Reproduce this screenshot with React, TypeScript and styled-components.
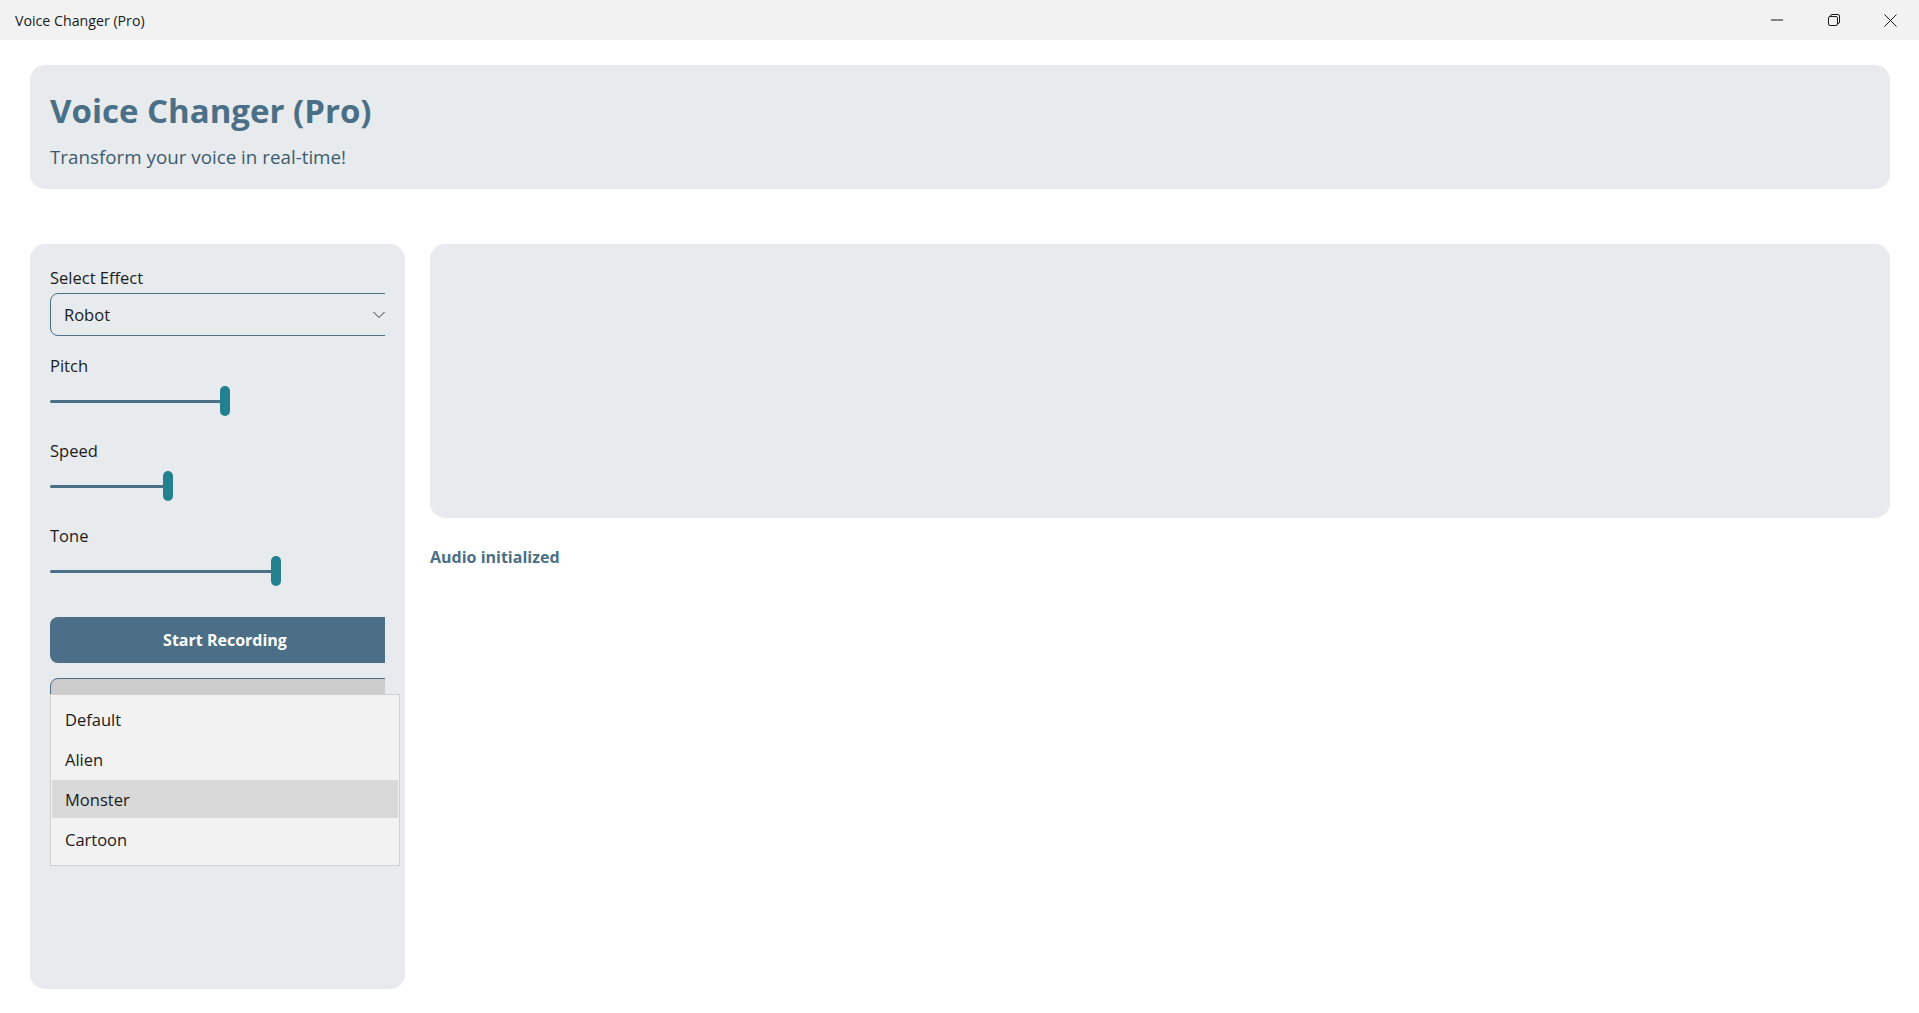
import styled, { createGlobalStyle } from 'styled-components'

const GlobalStyle = createGlobalStyle`
  html, body {
    margin: 0;
    padding: 0;
    background: #ffffff;
    font-family: "Open Sans", "Noto Sans", sans-serif;
    color: #1b1b1b;
  }
  * {
    box-sizing: border-box;
  }
`

const Window = styled.div`
  width: 1919px;
  height: 1013px;
  display: flex;
  flex-direction: column;
  overflow: hidden;
`

const TitleBar = styled.div`
  height: 40px;
  background: #f2f2f2;
  display: flex;
  align-items: center;
  justify-content: space-between;
  padding-left: 15px;
`

const TitleText = styled.span`
  font-size: 14.2px;
  color: #1a1a1a;
`

const Controls = styled.div`
  display: flex;
  height: 100%;
`

const ControlButton = styled.div`
  width: 57px;
  height: 100%;
  display: flex;
  align-items: center;
  justify-content: center;
`

const Content = styled.div`
  flex: 1;
  padding: 25px 29px 24px 30px;
  display: flex;
  flex-direction: column;
  gap: 55px;
`

const Header = styled.div`
  height: 124px;
  background: #e7ebee;
  border-radius: 15px;
  padding: 24px 20px 0 20px;
`

const Title = styled.h1`
  margin: 0;
  font-size: 33px;
  line-height: 44px;
  font-weight: 700;
  color: #4a6f86;
`

const Subtitle = styled.p`
  margin: 11px 0 0 0;
  font-size: 18.8px;
  line-height: 26px;
  color: #3d5b6e;
`

const Body = styled.div`
  flex: 1;
  display: flex;
  gap: 25px;
`

const SidePanel = styled.div`
  position: relative;
  width: 375px;
  background: #e7ebee;
  border-radius: 15px;
  padding: 22px 20px 20px 20px;
`

const Clip = styled.div`
  width: 335px;
  overflow: hidden;
`

const Label = styled.div<{ $gap?: number }>`
  font-size: 16.5px;
  line-height: 24px;
  margin-top: ${p => p.$gap ?? 0}px;
`

const Combo = styled.div<{ $open?: boolean; $gap?: number }>`
  width: 350px;
  height: 43px;
  margin-top: ${p => p.$gap ?? 0}px;
  border: 1px solid #4a6f86;
  border-radius: 8px;
  background: ${p => (p.$open ? '#cccccc' : 'transparent')};
  display: flex;
  align-items: center;
  padding-left: 13px;
  font-size: 16.5px;
  position: relative;
`

const Chevron = styled.svg`
  position: absolute;
  left: 322px;
  top: 17px;
`

const SliderBox = styled.div<{ $gap?: number }>`
  position: relative;
  width: 350px;
  height: 30px;
  margin-top: ${p => p.$gap ?? 0}px;
`

const Track = styled.div`
  position: absolute;
  left: 0;
  top: 14px;
  height: 3px;
  background: #4a6f86;
  border-radius: 2px;
`

const Thumb = styled.div`
  position: absolute;
  top: 0;
  width: 10px;
  height: 30px;
  border-radius: 5px;
  background: #23808f;
`

const RecordButton = styled.button`
  width: 350px;
  height: 46px;
  margin-top: 31px;
  border: none;
  border-radius: 8px;
  background: #4a6f86;
  color: #ffffff;
  font-family: inherit;
  font-size: 16px;
  font-weight: 700;
  padding: 0;
  display: block;
`

const Popup = styled.div`
  position: absolute;
  left: 20px;
  top: 450px;
  width: 350px;
  background: #f2f2f2;
  border: 1px solid #cfcfcf;
  padding: 5px 1px 7px 1px;
  display: flex;
  flex-direction: column;
  gap: 2px;
`

const Option = styled.div<{ $hover?: boolean }>`
  height: 38px;
  padding-left: 13px;
  display: flex;
  align-items: center;
  font-size: 16.5px;
  background: ${p => (p.$hover ? '#d9d9d9' : 'transparent')};
`

const MainColumn = styled.div`
  flex: 1;
  display: flex;
  flex-direction: column;
`

const Visualizer = styled.div`
  height: 274px;
  background: #e7ebee;
  border-radius: 15px;
`

const Status = styled.div`
  margin-top: 28px;
  font-size: 16px;
  font-weight: 700;
  color: #4a6f86;
`

const sliders = [
  { name: 'Pitch', value: 0.5 },
  { name: 'Speed', value: 0.332 },
  { name: 'Tone', value: 0.65 },
]

const effects = ['Default', 'Alien', 'Monster', 'Cartoon']

export default function App() {
  return (
    <Window>
      <GlobalStyle />
      <TitleBar>
        <TitleText>Voice Changer (Pro)</TitleText>
        <Controls>
          <ControlButton>
            <svg width="12" height="12" viewBox="0 0 12 12">
              <line x1="0" y1="6" x2="12" y2="6" stroke="#1a1a1a" strokeWidth="1" />
            </svg>
          </ControlButton>
          <ControlButton>
            <svg width="12" height="12" viewBox="0 0 12 12" fill="none" stroke="#1a1a1a" strokeWidth="1">
              <rect x="0.5" y="2.5" width="9" height="9" rx="1.5" />
              <path d="M2.5 2.5 V2 a1.5 1.5 0 0 1 1.5 -1.5 H10 a1.5 1.5 0 0 1 1.5 1.5 V8 a1.5 1.5 0 0 1 -1.5 1.5 H9.5" />
            </svg>
          </ControlButton>
          <ControlButton>
            <svg width="13" height="13" viewBox="0 0 13 13">
              <path d="M0.5 0.5 L12.5 12.5 M12.5 0.5 L0.5 12.5" stroke="#1a1a1a" strokeWidth="1" />
            </svg>
          </ControlButton>
        </Controls>
      </TitleBar>
      <Content>
        <Header>
          <Title>Voice Changer (Pro)</Title>
          <Subtitle>Transform your voice in real-time!</Subtitle>
        </Header>
        <Body>
          <SidePanel>
            <Clip>
              <Label>Select Effect</Label>
              <Combo $gap={3}>
                Robot
                <Chevron width="12" height="8" viewBox="0 0 12 8">
                  <path d="M0.5 1 L6 6.5 L11.5 1" fill="none" stroke="#333" strokeWidth="1" />
                </Chevron>
              </Combo>
              {sliders.map((s, i) => {
                const left = Math.round(s.value * 340)
                return (
                  <div key={s.name}>
                    <Label $gap={i === 0 ? 18 : 23}>{s.name}</Label>
                    <SliderBox $gap={8}>
                      <Track style={{ width: left + 5 }} />
                      <Thumb style={{ left }} />
                    </SliderBox>
                  </div>
                )
              })}
              <RecordButton>Start Recording</RecordButton>
              <Combo $open $gap={15} />
            </Clip>
            <Popup>
              {effects.map(e => (
                <Option key={e} $hover={e === 'Monster'}>
                  {e}
                </Option>
              ))}
            </Popup>
          </SidePanel>
          <MainColumn>
            <Visualizer />
            <Status>Audio initialized</Status>
          </MainColumn>
        </Body>
      </Content>
    </Window>
  )
}
